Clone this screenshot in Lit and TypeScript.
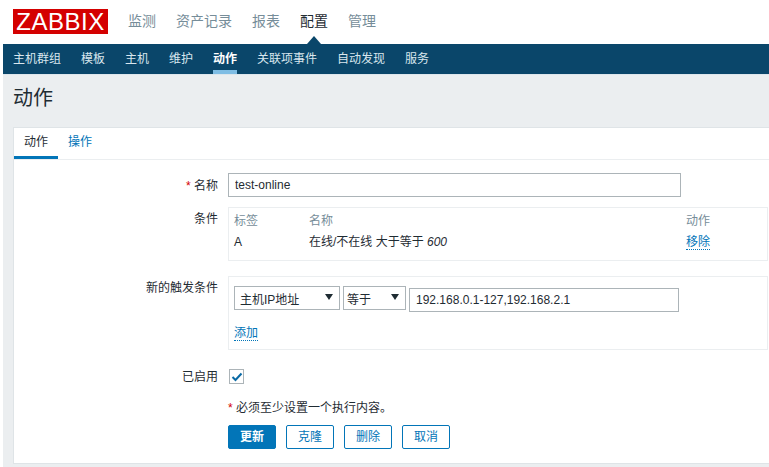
import { LitElement, html, css } from "lit";
import { customElement } from "lit/decorators.js";

@customElement("app-root")
export class AppRoot extends LitElement {
  static styles = css`
    :host { display: block; width: 769px; height: 467px; overflow: hidden; background: #fff; padding-left: 3px; box-sizing: border-box;
      font-family: "Liberation Sans", "Noto Sans CJK SC", sans-serif; font-size: 12px; color: #1f2c33; }
    .top { height: 44px; display: flex; align-items: center; padding-left: 10px; }
    .logo { width: 95px; height: 25px; background: #d40000; color: #fff; font-size: 24px; line-height: 25px; letter-spacing: .5px; text-align: center; margin-right: 20px; margin-top: -1px; }
    .menu { display: flex; gap: 20px; font-size: 14px; color: #768d99; margin-top: -4px; }
    .menu .on { color: #1f2c33; }
    .sub { position: relative; height: 30px; background: #0a466a; display: flex; gap: 20px; padding-left: 10px; color: #d9e6ee; line-height: 30px; }
    .sub .on { color: #fff; font-weight: 700; box-shadow: inset 0 -4px 0 #7fbde4; }
    .caret { position: absolute; left: 304px; top: -8px; border: 7.5px solid transparent; border-top: 0; border-bottom: 8px solid #0a466a; }
    .page { background: #ebeef0; height: 393px; padding: 0 0 0 10px; border-top: 1px solid #dde6ec; box-sizing: border-box; }
    h1 { margin: 0; height: 52px; font-size: 20px; font-weight: 400; line-height: 47px; color: #1f2c33; }
    .card { background: #fff; border: 1px solid #dfe4e7; border-right: 0; height: 337px; box-sizing: border-box; }
    .tabs { display: flex; height: 31px; border-bottom: 1px solid #ebeef0; line-height: 28px; }
    .tab { width: 44px; text-align: center; color: #0275b8; }
    .tab.on { color: #1f2c33; box-shadow: inset 0 -3px 0 #0275b8; }
    .form { display: grid; grid-template-columns: 204px 1fr; column-gap: 10px; padding: 13px 1px 0 0; align-items: start; }
    .lab { text-align: right; line-height: 20px; }
    .lab.first { line-height: 26px; height: 24px; }
    .lab.tall { line-height: 24px; }
    .lab.mid { line-height: 22px; }
    .req { color: #d40000; }
    input { font: inherit; color: #1f2c33; box-sizing: border-box; height: 24px; border: 1px solid #acb4b8; padding: 0 6px; background: #fff; outline: 0; display: block; }
    .name { width: 453px; margin-bottom: 10px; }
    .box { border: 1px solid #ebeef0; box-sizing: border-box; }
    .cond { height: 54px; display: grid; grid-template-columns: 75px 377px 1fr; grid-template-rows: 21px 22px; padding: 2px 0 0 5px; align-items: center; margin-bottom: 15px; line-height: 20px; }
    .hd { color: #768d99; }
    .lnk { display: inline-block; color: #0275b8; border-bottom: 1px dotted #0275b8; justify-self: start; line-height: 14px; }
    .new { height: 74px; padding: 9px 5px 0 5px; margin-bottom: 16px; }
    .row { display: flex; gap: 3px; margin-bottom: 14px; }
    .sel { box-sizing: border-box; height: 24px; border: 1px solid #acb4b8; display: flex; align-items: center; justify-content: space-between; padding: 0 6px 0 5px; }
    .sel.host { width: 106px; }
    .sel.op { width: 63px; padding-left: 3px; }
    .sel i { border: 4px solid transparent; border-bottom: 0; border-top: 6px solid #1f2c33; margin-top: -3px; }
    .ip { width: 270px; margin-top: 2px; }
    .chk { width: 15px; height: 15px; box-sizing: border-box; border: 1px solid #acb4b8; display: flex; align-items: center; justify-content: center; margin: 3px 0 14px 1px; }
    .note { line-height: 16px; margin: 2px 0 9px; }
    .btns { display: flex; gap: 10px; }
    .btn { box-sizing: border-box; width: 48px; height: 24px; line-height: 22px; text-align: center; border: 1px solid #0275b8; border-radius: 2px; color: #0275b8; }
    .btn.p { background: #0275b8; color: #fff; font-weight: 700; }
  `;

  render() {
    return html`
      <div class="top">
        <div class="logo">ZABBIX</div>
        <div class="menu">
          <span>监测</span><span>资产记录</span><span>报表</span><span class="on">配置</span><span>管理</span>
        </div>
      </div>
      <div class="sub">
        <span class="caret"></span>
        <span>主机群组</span><span>模板</span><span>主机</span><span>维护</span><span class="on">动作</span><span>关联项事件</span><span>自动发现</span><span>服务</span>
      </div>
      <div class="page">
        <h1>动作</h1>
        <div class="card">
          <div class="tabs"><div class="tab on">动作</div><div class="tab">操作</div></div>
          <div class="form">
            <div class="lab first"><span class="req">*</span> 名称</div>
            <input class="name" .value=${"test-online"} />
            <div class="lab tall">条件</div>
            <div class="box cond">
              <span class="hd">标签</span><span class="hd">名称</span><span class="hd">动作</span>
              <span>A</span><span>在线/不在线 大于等于 <em>600</em></span><span class="lnk">移除</span>
            </div>
            <div class="lab tall">新的触发条件</div>
            <div class="box new">
              <div class="row">
                <div class="sel host"><span>主机IP地址</span><i></i></div>
                <div class="sel op"><span>等于</span><i></i></div>
                <input class="ip" .value=${"192.168.0.1-127,192.168.2.1"} />
              </div>
              <span class="lnk">添加</span>
            </div>
            <div class="lab mid">已启用</div>
            <div class="chk"><svg width="12" height="10" viewBox="0 0 12 10"><path d="M1.5 5l3 3 6-6.5" fill="none" stroke="#0a6aa5" stroke-width="2"/></svg></div>
            <div></div>
            <div class="note"><span class="req">*</span> 必须至少设置一个执行内容。</div>
            <div></div>
            <div class="btns">
              <div class="btn p">更新</div><div class="btn">克隆</div><div class="btn">删除</div><div class="btn">取消</div>
            </div>
          </div>
        </div>
      </div>
    `;
  }
}
